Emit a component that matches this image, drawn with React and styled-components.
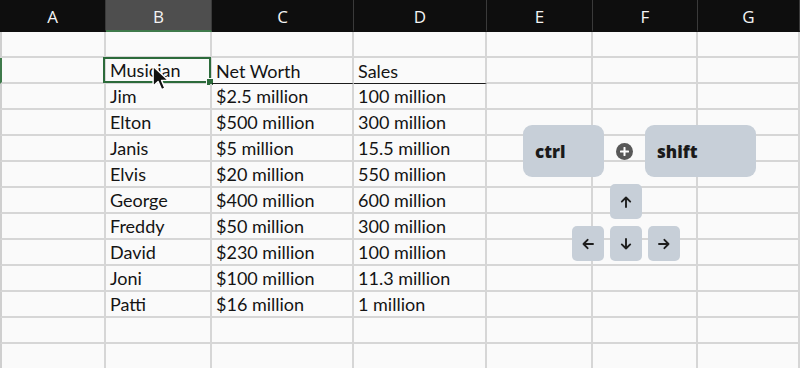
import React from "react";
import styled, { createGlobalStyle } from "styled-components";

const Global = createGlobalStyle`
  html, body { margin: 0; padding: 0; background: #fafafa; }
  body { width: 800px; height: 368px; overflow: hidden; }
`;

const COLS = [106, 106, 142, 133, 106, 105, 102];
const LETTERS = ["A", "B", "C", "D", "E", "F", "G"];

const Page = styled.div`
  position: relative;
  width: 800px;
  height: 368px;
  overflow: hidden;
  background: #fafafa;
`;

const Sheet = styled.div`
  display: grid;
  grid-template-columns: ${COLS.map((c) => c + "px").join(" ")};
  grid-template-rows: 32px repeat(13, 26px);
`;

const HeadCell = styled.div`
  box-sizing: border-box;
  display: flex;
  align-items: center;
  justify-content: center;
  background: ${(p) => (p.$active ? "#4e4e4e" : "#0e0e0e")};
  border-right: 1px solid #3a3a3a;
  border-bottom: 2px solid ${(p) => (p.$active ? "#3f7a4b" : "#0e0e0e")};
  color: #f4f4f4;
  font-family: "Open Sans", "Liberation Sans", sans-serif;
  font-size: 17px;
  font-weight: 500;
  padding-top: 2px;
`;

const Cell = styled.div`
  position: relative;
  box-sizing: border-box;
  border-right: 2px solid #d6d6d6;
  border-bottom: ${(p) => (p.$underline ? "1px solid #1c1c1c" : "2px solid #d6d6d6")};
  border-left: ${(p) => (p.$first ? `2px solid ${p.$mark ? "#3f7a4b" : "#cfcfcf"}` : "none")};
  padding: 0 4px;
  display: flex;
  align-items: center;
  font-family: "Lato", "Liberation Sans", sans-serif;
  font-size: 18px;
  color: #141414;
  white-space: nowrap;
  line-height: 1;
  padding-top: ${(p) => (p.$underline ? "1px" : "0")};
`;

const Selection = styled.div`
  position: absolute;
  left: -3px;
  top: -1px;
  right: -1px;
  bottom: -1px;
  border: 2px solid #2c6b3b;
  pointer-events: none;
  &::after {
    content: "";
    position: absolute;
    right: -5px;
    bottom: -5px;
    width: 6px;
    height: 6px;
    background: #2c6b3b;
    border: 1px solid #fafafa;
  }
`;

const Pointer = styled.svg`
  position: absolute;
  left: 46px;
  top: 7px;
  width: 20px;
  height: 27px;
  overflow: visible;
`;

const Keys = styled.div`
  position: absolute;
  left: 523px;
  top: 125px;
  display: flex;
  flex-direction: column;
  gap: 7px;
`;

const ComboRow = styled.div`
  display: flex;
  align-items: center;
  gap: 12px;
`;

const BigKey = styled.div`
  box-sizing: border-box;
  width: ${(p) => p.$w}px;
  height: 52px;
  border-radius: 9px;
  background: #c7cfd8;
  display: flex;
  align-items: center;
  padding-left: 12px;
  font-family: "Open Sans", "Liberation Sans", sans-serif;
  font-weight: 800;
  font-size: 17px;
  color: #1a1a1a;
`;

const Plus = styled.div`
  width: 17px;
  height: 17px;
  border-radius: 50%;
  background: #585858;
  display: flex;
  align-items: center;
  justify-content: center;
`;

const ArrowCluster = styled.div`
  margin-left: 49px;
  display: grid;
  grid-template-columns: repeat(3, 32px);
  grid-template-rows: 35px 35px;
  column-gap: 6px;
  row-gap: 7px;
`;

const ArrowKey = styled.div`
  grid-column: ${(p) => p.$col};
  grid-row: ${(p) => p.$row};
  background: #c7cfd8;
  border-radius: 5px;
  display: flex;
  align-items: center;
  justify-content: center;
`;

const ROWS = [
  ["", "", ""],
  ["Musician", "Net Worth", "Sales"],
  ["Jim", "$2.5 million", "100 million"],
  ["Elton", "$500 million", "300 million"],
  ["Janis", "$5 million", "15.5 million"],
  ["Elvis", "$20 million", "550 million"],
  ["George", "$400 million", "600 million"],
  ["Freddy", "$50 million", "300 million"],
  ["David", "$230 million", "100 million"],
  ["Joni", "$100 million", "11.3 million"],
  ["Patti", "$16 million", "1 million"],
  ["", "", ""],
  ["", "", ""],
];

const Arrow = ({ dir }) => {
  const rot = { up: 0, right: 90, down: 180, left: 270 }[dir];
  return (
    <svg width="12" height="12" viewBox="0 0 12 12" style={{ transform: `rotate(${rot}deg)` }}>
      <path d="M6 11V1.5M1.8 5.6L6 1.5l4.2 4.1" fill="none" stroke="#1e1e1e" strokeWidth="1.9" strokeLinecap="round" strokeLinejoin="round" />
    </svg>
  );
};

export default function App() {
  return (
    <Page>
      <Global />
      <Sheet>
        {LETTERS.map((l) => (
          <HeadCell key={l} $active={l === "B"}>{l}</HeadCell>
        ))}
        {ROWS.map((r, ri) =>
          LETTERS.map((l, ci) => {
            const text = ci >= 1 && ci <= 3 ? r[ci - 1] : "";
            const selected = ri === 1 && ci === 1;
            return (
              <Cell
                key={l + ri}
                $first={ci === 0}
                $mark={ri === 1}
                $underline={ri === 1 && (ci === 2 || ci === 3)}
              >
                {text}
                {selected && (
                  <>
                    <Selection />
                    <Pointer viewBox="0 0 18 24">
                      <path d="M1 1 L1 19 L5.5 14.8 L8.6 22 L11.6 20.7 L8.6 13.7 L14.6 13.5 Z" fill="#111" stroke="#fff" strokeWidth="1.3" strokeLinejoin="round" />
                    </Pointer>
                  </>
                )}
              </Cell>
            );
          })
        )}
      </Sheet>
      <Keys>
        <ComboRow>
          <BigKey $w={81}>ctrl</BigKey>
          <Plus>
            <svg width="9" height="9" viewBox="0 0 9 9">
              <path d="M4.5 0.8v7.4M0.8 4.5h7.4" stroke="#fff" strokeWidth="2" strokeLinecap="round" />
            </svg>
          </Plus>
          <BigKey $w={111}>shift</BigKey>
        </ComboRow>
        <ArrowCluster>
          <ArrowKey $col={2} $row={1}><Arrow dir="up" /></ArrowKey>
          <ArrowKey $col={1} $row={2}><Arrow dir="left" /></ArrowKey>
          <ArrowKey $col={2} $row={2}><Arrow dir="down" /></ArrowKey>
          <ArrowKey $col={3} $row={2}><Arrow dir="right" /></ArrowKey>
        </ArrowCluster>
      </Keys>
    </Page>
  );
}
